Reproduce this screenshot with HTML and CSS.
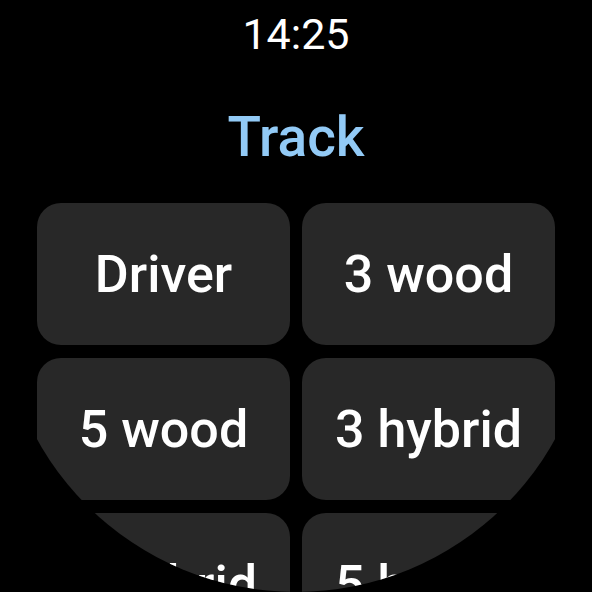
FILE: index.html
```html
<!DOCTYPE html>
<html lang="en">
<head>
  <meta charset="UTF-8" />
  <meta name="viewport" content="width=device-width, initial-scale=1.0" />
  <title>Track</title>
  <link rel="stylesheet" href="styles.css">
</head>
<body>
  <!-- round watch screen -->
  <div class="screen">
    <div class="time">14:25</div>
    <h1 class="title">Track</h1>
    <div class="club-grid">
      <button class="club">Driver</button>
      <button class="club">3 wood</button>
      <button class="club">5 wood</button>
      <button class="club">3 hybrid</button>
      <button class="club">4 hybrid</button>
      <button class="club">5 hybrid</button>
    </div>
  </div>
</body>
</html>
```

FILE: styles.css
```css
:root {
  --bg-color: #000;
  --chip-color: #282828;
  --title-color: #92caf6;
  --text-color: #fff;
}
* {
  box-sizing: border-box;
  margin: 0;
  padding: 0;
}
body {
  background-color: var(--bg-color);
  font-family: Roboto, 'Noto Sans', sans-serif;
  color: var(--text-color);
}
.screen {
  width: 592px;
  height: 592px;
  border-radius: 50%;
  overflow: hidden;
  background-color: var(--bg-color);
  display: flex;
  flex-direction: column;
  align-items: center;
}
.time {
  font-size: 43px;
  font-weight: 400;
  line-height: 50px;
  margin-top: 9px;
}
.title {
  color: var(--title-color);
  font-size: 55px;
  font-weight: 500;
  line-height: 60px;
  margin-top: 48px;
}
.club-grid {
  display: grid;
  grid-template-columns: 1fr 1fr;
  grid-auto-rows: 142px;
  gap: 12px 12px;
  row-gap: 13px;
  width: 100%;
  padding: 0 37px;
  margin-top: 36px;
}
.club {
  background-color: var(--chip-color);
  color: var(--text-color);
  border: none;
  border-radius: 24px;
  font-family: inherit;
  font-size: 52px;
  font-weight: 500;
}
```
